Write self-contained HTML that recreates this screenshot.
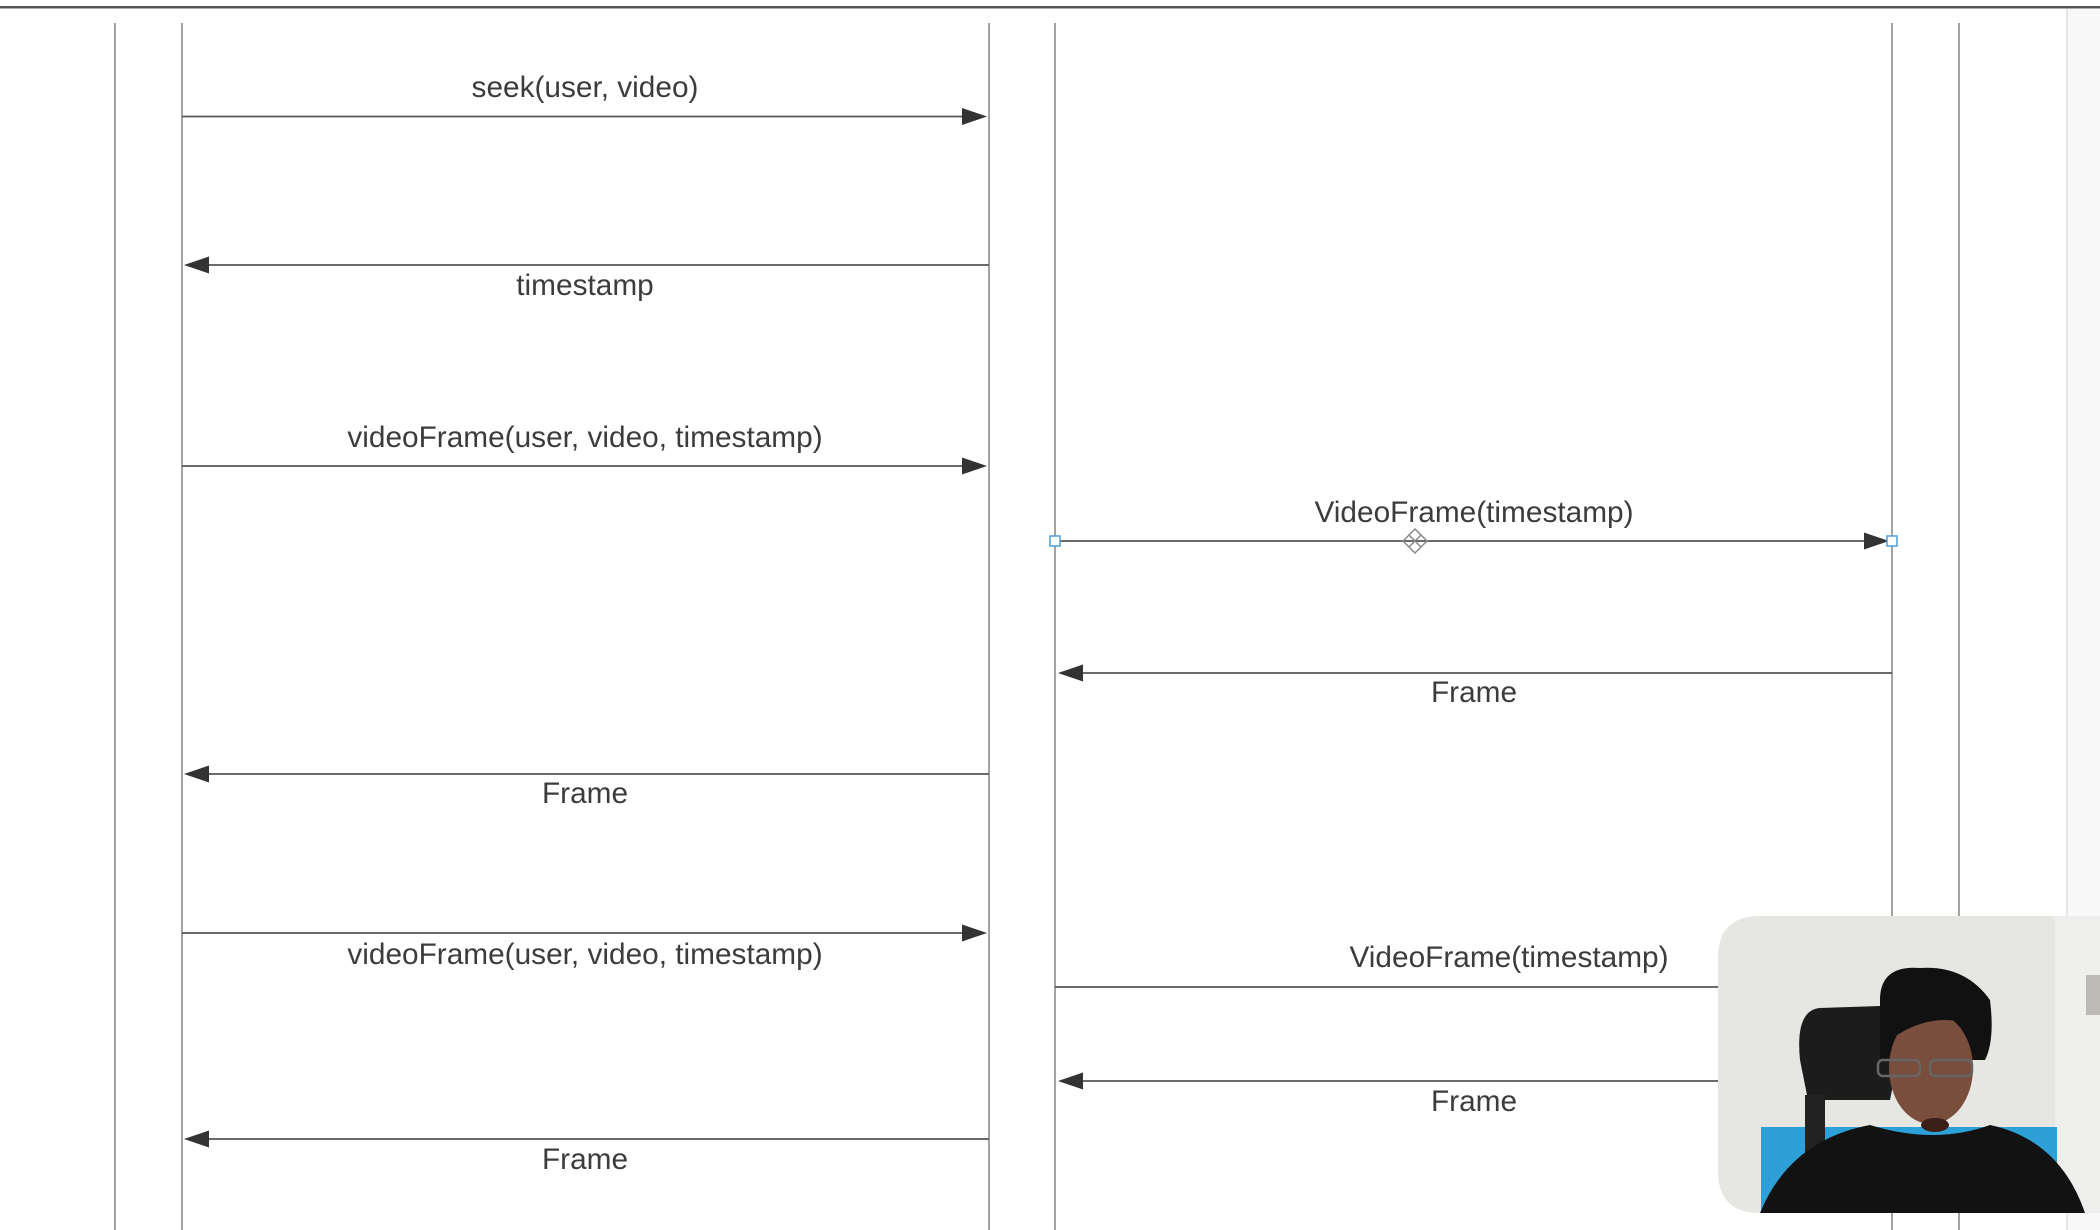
<!DOCTYPE html>
<html><head><meta charset="utf-8"><style>
html,body{margin:0;padding:0;background:#fff;width:2100px;height:1230px;overflow:hidden}
svg{display:block}
text{font-family:"Liberation Sans",sans-serif;font-size:29.8px;fill:#3c3c3c;text-anchor:middle}
</style></head><body>
<svg width="2100" height="1230" viewBox="0 0 2100 1230">
<rect x="0" y="0" width="2100" height="1230" fill="#fff"/>
<rect x="2066" y="9" width="34" height="1221" fill="#f8f8f8"/>
<line x1="2067" y1="9" x2="2067" y2="1230" stroke="#e6e6e6" stroke-width="2"/>
<rect x="0" y="6" width="2100" height="2.5" fill="#555"/>
<g stroke="#8a8a8a" stroke-width="1.6">
<line x1="115" y1="23" x2="115" y2="1230"/>
<line x1="182" y1="23" x2="182" y2="1230"/>
<line x1="989" y1="23" x2="989" y2="1230"/>
<line x1="1055" y1="23" x2="1055" y2="1230"/>
<line x1="1892" y1="23" x2="1892" y2="1230"/>
<line x1="1959" y1="23" x2="1959" y2="1230"/>
</g>
<g stroke="#555" stroke-width="1.8">
<line x1="182" y1="116.5" x2="970" y2="116.5"/>
<line x1="200" y1="265" x2="989" y2="265"/>
<line x1="182" y1="466" x2="970" y2="466"/>
<line x1="1055" y1="541" x2="1870" y2="541"/>
<line x1="1074" y1="673" x2="1892" y2="673"/>
<line x1="200" y1="774" x2="989" y2="774"/>
<line x1="182" y1="933" x2="970" y2="933"/>
<line x1="1055" y1="987" x2="1720" y2="987"/>
<line x1="1074" y1="1081" x2="1720" y2="1081"/>
<line x1="200" y1="1139" x2="989" y2="1139"/>
</g>
<g fill="#333">
<polygon points="962,108 987,116.5 962,125"/>
<polygon points="184,265 209,256.5 209,273.5"/>
<polygon points="962,457.5 987,466 962,474.5"/>
<polygon points="1864,532.5 1889,541 1864,549.5"/>
<polygon points="1058,673 1083,664.5 1083,681.5"/>
<polygon points="184,774 209,765.5 209,782.5"/>
<polygon points="962,924.5 987,933 962,941.5"/>
<polygon points="1058,1081 1083,1072.5 1083,1089.5"/>
<polygon points="184,1139 209,1130.5 209,1147.5"/>
</g>
<rect x="1050" y="536" width="10" height="10" fill="#fff" stroke="#4a9fd8" stroke-width="1.5"/>
<rect x="1887" y="536" width="10" height="10" fill="#fff" stroke="#4a9fd8" stroke-width="1.5"/>
<g stroke="#888" stroke-width="1.5" fill="none">
<path d="M1403,541 l6,-6 l6,6 l-6,6 z M1415,541 l6,-6 l6,6 l-6,6 z M1409,535 l6,-6 l6,6 l-6,6 z M1409,547 l6,-6 l6,6 l-6,6 z"/>
</g>
<text x="585" y="97">seek(user, video)</text>
<text x="585" y="295">timestamp</text>
<text x="585" y="447">videoFrame(user, video, timestamp)</text>
<text x="1474" y="522">VideoFrame(timestamp)</text>
<text x="1474" y="702">Frame</text>
<text x="585" y="803">Frame</text>
<text x="585" y="964">videoFrame(user, video, timestamp)</text>
<text x="1509" y="967">VideoFrame(timestamp)</text>
<text x="1474" y="1111">Frame</text>
<text x="585" y="1169">Frame</text>
<defs><clipPath id="cam"><path d="M1760,916 H2100 V1213 H1760 Q1718,1213 1718,1171 V958 Q1718,916 1760,916 Z"/></clipPath></defs>
<g clip-path="url(#cam)">
<rect x="1718" y="916" width="382" height="297" fill="#e6e6e3"/>
<rect x="2055" y="916" width="45" height="297" fill="#eeeeec"/>
<rect x="2086" y="975" width="14" height="40" fill="#bdbab5"/>
<rect x="1761" y="1127" width="296" height="86" fill="#2ea0d8"/>
<path d="M1800,1060 Q1795,1010 1820,1008 L1880,1006 Q1900,1010 1898,1060 L1890,1100 L1808,1100 Z" fill="#1c1c1c"/>
<rect x="1805" y="1095" width="20" height="80" fill="#222"/>
<path d="M1880,1000 Q1880,965 1920,968 Q1965,965 1990,1000 Q1995,1040 1985,1060 L1880,1060 Z" fill="#111"/>
<ellipse cx="1931" cy="1068" rx="42" ry="56" fill="#7a4e3c"/>
<path d="M1885,1030 Q1890,975 1935,975 Q1985,975 1985,1040 L1975,1025 Q1930,1010 1890,1040 Z" fill="#111"/>
<g stroke="#666" stroke-width="2.5" fill="none"><rect x="1878" y="1060" width="42" height="16" rx="5"/><rect x="1930" y="1060" width="42" height="16" rx="5"/></g>
<ellipse cx="1935" cy="1125" rx="14" ry="7" fill="#3a2018"/>
<path d="M1760,1213 Q1790,1140 1870,1125 Q1935,1145 1990,1125 Q2060,1140 2085,1213 Z" fill="#121212"/>
</g>
</svg>
</body></html>
